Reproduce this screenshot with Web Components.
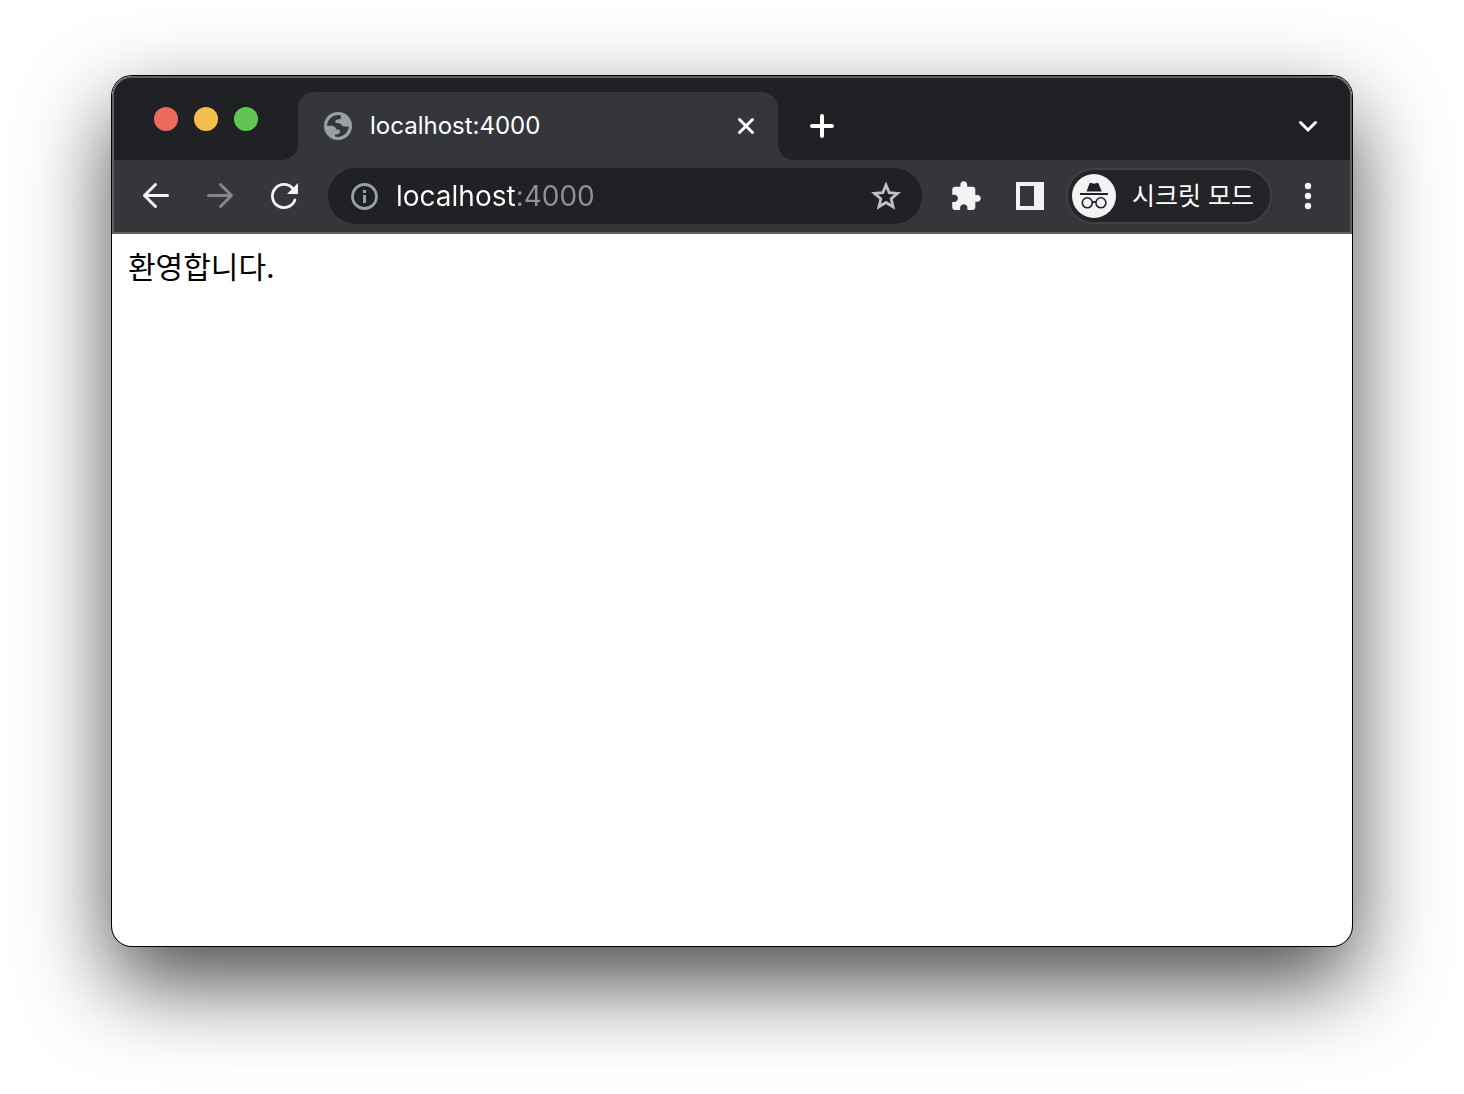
<!DOCTYPE html>
<html lang="ko">
<head>
<meta charset="utf-8">
<title>localhost:4000</title>
<style>
   html, body { margin: 0; background: #fff }
   body {
      display: flex;
      min-height: 100vh;
      box-sizing: border-box;
      padding: 76px 112px 148px;
      font-family: Inter, "Noto Sans CJK KR", sans-serif;
   }
</style>
</head>
<body>

<browser-window>
   <tab-strip slot="chrome">
      <browser-tab>localhost:4000</browser-tab>
   </tab-strip>
   <tool-bar slot="chrome">
      <address-bar value="localhost:4000"></address-bar>
      <profile-chip slot="actions">시크릿 모드</profile-chip>
   </tool-bar>
   <page-view>환영합니다.</page-view>
</browser-window>

<script>

const icons = {
   back: '<path d="M27.500 15.500H5M15.5 4.5L4.5 15.5L15.5 26.5" fill="none" stroke="currentColor" stroke-width="3" stroke-linecap="round" stroke-linejoin="round"/>',
   forward: '<path d="M4.500 15.500H27M16.5 4.5L27.5 15.5L16.5 26.5" fill="none" stroke="currentColor" stroke-width="3" stroke-linecap="round" stroke-linejoin="round"/>',
   reload: '<path d="M25 8.7A11.6 11.6 0 1 0 26.9 20" fill="none" stroke="currentColor" stroke-width="2.8" stroke-linecap="round"/><path d="M30 3V14H19z" fill="currentColor"/>',
   close: '<path d="M9.500 9.500L22.500 22.500M22.500 9.500L9.500 22.500" stroke="currentColor" stroke-width="3" stroke-linecap="round"/>',
   plus: '<path d="M16 6V26M6 16H26" stroke="currentColor" stroke-width="4" stroke-linecap="round"/>',
   chevron: '<path d="M8.5 12.500L16 20L23.5 12.500" fill="none" stroke="currentColor" stroke-width="3" stroke-linecap="round"/>',
   globe: '<circle cx="16" cy="16" r="14" fill="currentColor"/><path d="M5 15.7C5.3 9.8 10 5 16.5 5L19 5.4V7C19 8.800 17.500 9.500 15.500 9.500C14 9.500 13.500 10.200 13.500 11.500V13C17 13 18.500 13.500 19.500 15C20.300 16.400 21.500 16.500 23 16.500H26.700C26.500 21.500 22.500 26.500 16 27L13 26.600V24.500C16.500 24.500 18 23.500 18 21.500C18 20 17 19.500 14.500 19.500C13.500 17 12 15.700 9.500 15.700Z" fill="#35363a"/>',
   info: '<circle cx="16.500" cy="16.500" r="12" fill="none" stroke="currentColor" stroke-width="2.800"/><path d="M15 10H18V13H15zM15 15H18V23H15z" fill="currentColor"/>',
   star: '<path d="M16 5L19.200 12.600L27.500 13.300L21.200 18.700L23.100 26.800L16 22.500L8.900 26.800L10.800 18.700L4.500 13.300L12.800 12.600z" fill="none" stroke="currentColor" stroke-width="2.800"/>',
   puzzle: '<path transform="translate(-.5 0) scale(1.36)" d="M20.500 11H19V7c0-1.100-.900-2-2-2h-4V3.500C13 2.120 11.880 1 10.500 1S8 2.120 8 3.500V5H4c-1.100 0-1.990.900-1.990 2v3.800H3.500c1.490 0 2.700 1.210 2.700 2.700s-1.210 2.700-2.700 2.700H2V20c0 1.100.900 2 2 2h3.800v-1.500c0-1.490 1.210-2.700 2.700-2.700 1.490 0 2.700 1.210 2.700 2.700V22H17c1.100 0 2-.900 2-2v-4h1.500c1.380 0 2.500-1.120 2.500-2.500S21.880 11 20.500 11z" fill="currentColor"/>',
   panel: '<path d="M2 2H30V30H2zM6 6V26H20V6z" fill="currentColor" fill-rule="evenodd"/>',
   more: '<g fill="currentColor"><circle cx="16" cy="6" r="3.200"/><circle cx="16" cy="16" r="3.200"/><circle cx="16" cy="26" r="3.200"/></g>'
};

const icon = name => `<svg viewBox="0 0 32 32" width="32" height="32" aria-hidden="true">${ icons[ name ] }</svg>`;

const define = ( selector, styles, template, onCreate ) => {
   customElements.define( selector, class extends HTMLElement {
      constructor() { super();
         const templateEl = document.createElement( 'template' );
         templateEl.innerHTML = `<style>${ styles }</style>${ template }`;
         this.attachShadow( { mode: 'open' } )
            .appendChild( templateEl.content.cloneNode( true ) );
      }
      connectedCallback() { onCreate && onCreate.call( this ) }
   });
}

const buttonStyles = `
   button {
      display: flex; align-items: center; justify-content: center; flex: none;
      width: 56px; height: 56px; padding: 0; border: 0; border-radius: 28px;
      background: none; color: #f1f3f4;
   }
   button:disabled { color: #86878a }
   svg { display: block; flex: none }
`;

define( 'browser-window', `
   :host {
      display: flex; flex-direction: column; flex: 1; min-width: 0;
      border-radius: 20px; background: #fff; overflow: hidden;
      box-shadow: 0 0 0 1px #000, 0 36px 88px rgba(0, 0, 0, .72);
   }
   header { border: 2px solid #5f6063; border-radius: 20px 20px 0 0; background: #35363a; overflow: hidden }
   main { display: flex; flex: 1 }
`, `
   <header><slot name="chrome"></slot></header>
   <main><slot></slot></main>
` );

define( 'tab-strip', buttonStyles + `
   :host { display: flex; height: 82px; background: #35363a; color: #fff }
   .controls, .tabs, .tail { background: #202124 }
   .controls {
      display: flex; align-items: center; gap: 16px;
      padding: 0 40px; border-bottom-right-radius: 16px;
   }
   .controls button { width: 24px; height: 24px; border-radius: 50% }
   .close { background: #ed6a5e }
   .minimize { background: #f5bf4f }
   .zoom { background: #61c554 }
   .tabs { display: flex; flex: 0 1 480px; min-width: 0; padding-top: 14px }
   .tail {
      display: flex; align-items: center; justify-content: space-between; flex: 1;
      padding: 14px 14px 0 16px; border-bottom-left-radius: 16px;
   }
   .tail button { color: #fff }
`, `
   <div class="controls">
      <button class="close" aria-label="닫기"></button>
      <button class="minimize" aria-label="최소화"></button>
      <button class="zoom" aria-label="확대"></button>
   </div>
   <div class="tabs"><slot></slot></div>
   <div class="tail">
      <button aria-label="새 탭">${ icon( 'plus' ) }</button>
      <button aria-label="탭 검색">${ icon( 'chevron' ) }</button>
   </div>
` );

define( 'browser-tab', buttonStyles + `
   :host {
      display: flex; align-items: center; flex: 1; min-width: 0; gap: 16px;
      padding: 0 16px 0 24px; border-radius: 16px 16px 0 0;
      background: #35363a; font-size: 24px; line-height: 32px;
   }
   .favicon { color: #9aa0a6 }
   .title { flex: 1; min-width: 0; overflow: hidden; white-space: nowrap }
   button { width: 32px; height: 32px; color: #fff }
`, `
   <span class="favicon">${ icon( 'globe' ) }</span>
   <span class="title"><slot></slot></span>
   <button aria-label="탭 닫기">${ icon( 'close' ) }</button>
` );

define( 'tool-bar', buttonStyles + `
   :host { display: flex; align-items: center; gap: 8px; height: 72px; padding: 0 14px }
`, `
   <button aria-label="뒤로">${ icon( 'back' ) }</button>
   <button aria-label="앞으로" disabled>${ icon( 'forward' ) }</button>
   <button aria-label="새로고침">${ icon( 'reload' ) }</button>
   <slot></slot>
   <button aria-label="확장 프로그램">${ icon( 'puzzle' ) }</button>
   <button aria-label="측면 패널">${ icon( 'panel' ) }</button>
   <slot name="actions"></slot>
   <button aria-label="메뉴">${ icon( 'more' ) }</button>
` );

define( 'address-bar', buttonStyles + `
   :host {
      display: flex; align-items: center; flex: 1; min-width: 0; height: 56px;
      margin: 0 8px; border-radius: 28px; background: #202124;
   }
   .info { width: 32px; margin: 0 16px 0 20px; color: #9aa0a6 }
   .star { width: 32px; margin: 0 20px; color: #bdc1c6 }
   /* the host name is bright, the port after it is dimmed */
   input {
      flex: 1; min-width: 0; height: 40px; padding: 0; border: 0; outline: 0;
      font: inherit; font-size: 28px; color: #fff;
      background: linear-gradient(to right, #fff var(--host-width, 100%), #8f9194 0) text;
      -webkit-text-fill-color: transparent;
   }
`, `
   <button class="info" aria-label="사이트 정보 보기">${ icon( 'info' ) }</button>
   <input type="text" aria-label="주소창" spellcheck="false">
   <button class="star" aria-label="북마크에 추가">${ icon( 'star' ) }</button>
`, function() {
   const input = this.shadowRoot.querySelector( 'input' ),
      pen = document.createElement( 'canvas' ).getContext( '2d' );
   input.value = this.getAttribute( 'value' );
   pen.font = getComputedStyle( input ).font;
   const host = input.value.split( ':' )[ 0 ];
   input.style.setProperty( '--host-width', Math.round( pen.measureText( host ).width ) + 'px' );
} );

define( 'profile-chip', `
   :host { display: block; flex: none }
   button {
      display: flex; align-items: center; gap: 16px; box-sizing: border-box;
      height: 56px; padding: 0 16px 0 4px; border: 2px solid #3f4044; border-radius: 28px;
      background: #242328; color: #fff; font: inherit; font-size: 25px; line-height: 32px;
   }
   svg { display: block; flex: none }
`, `
   <button>
      <svg viewBox="0 0 44 44" width="44" height="44" aria-hidden="true">
         <circle cx="22" cy="22" r="22" fill="#f1f3f4"/>
         <path d="M14.500 17.500L17.500 9.500Q18 8.500 19.200 8.900L22 9.800L24.800 8.900Q26 8.500 26.500 9.500L29.800 17.500z" fill="#202124"/>
         <path d="M8 20H36" stroke="#202124" stroke-width="2"/>
         <g fill="none" stroke="#202124" stroke-width="1.600">
            <circle cx="15.300" cy="28.800" r="5"/>
            <circle cx="28.900" cy="28.800" r="5"/>
            <path d="M20.300 28.500Q22.100 27.300 23.900 28.500"/>
         </g>
      </svg>
      <slot></slot>
   </button>
` );

define( 'page-view', `
   :host { display: block; flex: 1; padding: 16px; color: #000; font-size: 30px; line-height: 34px }
   p { margin: 0 }
`, `<p><slot></slot></p>` );

</script>
</body>
</html>
